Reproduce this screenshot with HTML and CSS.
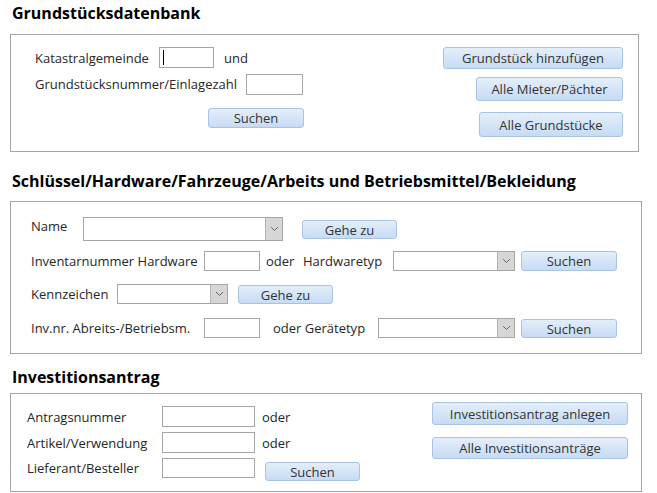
FILE: index.html
```html
<!DOCTYPE html>
<html>
<head>
  <title>Verwaltung</title>
<link rel="stylesheet" href="styles.css">
</head>
<body>
  <div class="form">
    <h2 class="title">Grundstücksdatenbank</h2>
    <div class="box box-grund">
      <div class="col-left">
        <div class="row">
          <span class="lbl w124">Katastralgemeinde</span>
          <span class="field w55"><i class="caret"></i></span>
          <span class="txt ml10">und</span>
        </div>
        <div class="row mt6 h20">
          <span class="lbl w211">Grundstücksnummer/Einlagezahl</span>
          <span class="field w57"></span>
        </div>
        <button class="btn btn-suchen1">Suchen</button>
      </div>
      <div class="col-right cr-grund">
        <button class="btn gb1">Grundstück hinzufügen</button>
        <button class="btn gb2">Alle Mieter/Pächter</button>
        <button class="btn gb3">Alle Grundstücke</button>
      </div>
    </div>

    <h2 class="title t2">Schlüssel/Hardware/Fahrzeuge/Arbeits und Betriebsmittel/Bekleidung</h2>
    <div class="box box-inv">
      <div class="col-left cl-inv">
        <div class="row h24">
          <span class="lbl w52 up">Name</span>
          <span class="combo w200"><span class="arrow"><svg width="9" height="6" viewBox="0 0 9 6"><path d="M1 1l3.5 3.5L8 1" fill="none" stroke="#666" stroke-width="1"/></svg></span></span>
          <button class="btn ml19 w95 h19">Gehe zu</button>
        </div>
        <div class="row mt9">
          <span class="lbl w173">Inventarnummer Hardware</span>
          <span class="field w56 h20"></span>
          <span class="txt ml6 w37">oder</span>
          <span class="lbl w90">Hardwaretyp</span>
          <span class="combo w122 h20"><span class="arrow"><svg width="9" height="6" viewBox="0 0 9 6"><path d="M1 1l3.5 3.5L8 1" fill="none" stroke="#666" stroke-width="1"/></svg></span></span>
          <button class="btn ml6 w96 h20">Suchen</button>
        </div>
        <div class="row mt13 h20">
          <span class="lbl w86">Kennzeichen</span>
          <span class="combo w111 h20"><span class="arrow"><svg width="9" height="6" viewBox="0 0 9 6"><path d="M1 1l3.5 3.5L8 1" fill="none" stroke="#666" stroke-width="1"/></svg></span></span>
          <button class="btn ml10 w95 h19">Gehe zu</button>
        </div>
        <div class="row mt14 h20">
          <span class="lbl w173">Inv.nr. Abreits-/Betriebsm.</span>
          <span class="field w56 h20"></span>
          <span class="txt ml13 w105">oder Gerätetyp</span>
          <span class="combo w137 h20"><span class="arrow"><svg width="9" height="6" viewBox="0 0 9 6"><path d="M1 1l3.5 3.5L8 1" fill="none" stroke="#666" stroke-width="1"/></svg></span></span>
          <button class="btn ml6 w96 h19">Suchen</button>
        </div>
      </div>
    </div>

    <h2 class="title t3">Investitionsantrag</h2>
    <div class="box box-antrag">
      <div class="col-left cl-antrag">
        <div class="row">
          <span class="lbl w135">Antragsnummer</span>
          <span class="field w93"></span>
          <span class="txt ml7">oder</span>
        </div>
        <div class="row mt5">
          <span class="lbl w135">Artikel/Verwendung</span>
          <span class="field w93"></span>
          <span class="txt ml7">oder</span>
        </div>
        <div class="row mt5 top">
          <span class="lbl w135 lh21">Lieferant/Besteller</span>
          <span class="field w93 h20"></span>
          <button class="btn ml10 w95 h19 mt4">Suchen</button>
        </div>
      </div>
      <div class="col-right cr-antrag">
        <button class="btn w196 h23">Investitionsantrag anlegen</button>
        <button class="btn w196 h22 mt12">Alle Investitionsanträge</button>
      </div>
    </div>
  </div>
</body>
</html>
```

FILE: styles.css
```css
* {
  box-sizing: border-box;
}
body {
  margin: 0;
  font-family: "Open Sans", Arial, sans-serif;
  font-size: 13px;
  color: #262626;
  background-color: #fff;
}
.form {
  padding: 3px 0 0 10px;
}
.title {
  margin: 0;
  padding-left: 2px;
  height: 20px;
  line-height: 20px;
  font-size: 16px;
  font-weight: 700;
  color: #000;
  white-space: nowrap;
}
.t2 {
  margin-top: 19px;
}
.t3 {
  margin-top: 13px;
}
.box {
  display: flex;
  justify-content: space-between;
  border: 1px solid #a5a5a5;
}
.box-grund {
  width: 629px;
  height: 118px;
  margin-top: 11px;
}
.box-inv {
  width: 632px;
  height: 153px;
  margin-top: 10px;
}
.box-antrag {
  width: 632px;
  height: 99px;
  margin-top: 6px;
}

/* columns */
.col-left {
  padding: 12px 0 0 24px;
}
.cl-inv {
  padding: 15px 0 0 20px;
}
.cl-antrag {
  padding: 12px 0 0 16px;
}
.col-right {
  display: flex;
  flex-direction: column;
  align-items: flex-end;
}
.cr-grund {
  padding: 12px 15px 0 0;
}
.cr-antrag {
  padding: 8px 13px 0 0;
}

/* rows */
.row {
  display: flex;
  align-items: center;
  height: 21px;
}
.row.top {
  align-items: flex-start;
}
.lbl, .txt {
  white-space: nowrap;
  flex-shrink: 0;
}
.up {
  position: relative;
  top: -3px;
}
.lh21 {
  line-height: 20px;
}

/* controls */
.field {
  position: relative;
  display: block;
  height: 21px;
  border: 1px solid #a6a6a6;
  background-color: #fff;
  flex-shrink: 0;
}
.caret {
  position: absolute;
  left: 3px;
  top: 2px;
  width: 1px;
  height: 15px;
  background-color: #000;
}
.combo {
  display: flex;
  justify-content: flex-end;
  height: 24px;
  border: 1px solid #a6a6a6;
  background-color: #fff;
  flex-shrink: 0;
}
.arrow {
  display: flex;
  align-items: center;
  justify-content: center;
  width: 17px;
  border-left: 1px solid #b4b4b4;
  background-color: #d6d6d6;
}
.btn {
  display: block;
  padding: 0;
  border: 1px solid #a9c3e2;
  border-radius: 3px;
  background: linear-gradient(#e4eefa, #c6dbf3);
  font-family: "Open Sans", Arial, sans-serif;
  font-size: 13px;
  color: #333;
  cursor: pointer;
  flex-shrink: 0;
}
.btn-suchen1 {
  width: 96px;
  height: 20px;
  margin: 14px 0 0 173px;
}
.gb1 {
  width: 180px;
  height: 22px;
}
.gb2 {
  width: 147px;
  height: 24px;
  margin-top: 8px;
}
.gb3 {
  width: 144px;
  height: 25px;
  margin-top: 11px;
}

/* sizes */
.w37 { width: 37px; }
.w52 { width: 52px; }
.w55 { width: 55px; }
.w56 { width: 56px; }
.w57 { width: 57px; }
.w86 { width: 86px; }
.w90 { width: 90px; }
.w93 { width: 93px; }
.w95 { width: 95px; }
.w96 { width: 96px; }
.w105 { width: 105px; }
.w111 { width: 111px; }
.w122 { width: 122px; }
.w124 { width: 124px; }
.w135 { width: 135px; }
.w137 { width: 137px; }
.w173 { width: 173px; }
.w196 { width: 196px; }
.w200 { width: 200px; }
.w211 { width: 211px; }
.h19 { height: 19px; }
.h20 { height: 20px; }
.h22 { height: 22px; }
.h23 { height: 23px; }
.h24 { height: 24px; }
.mt4 { margin-top: 4px; }
.mt5 { margin-top: 5px; }
.mt6 { margin-top: 6px; }
.mt9 { margin-top: 9px; }
.mt12 { margin-top: 12px; }
.mt13 { margin-top: 13px; }
.mt14 { margin-top: 14px; }
.ml6 { margin-left: 6px; }
.ml7 { margin-left: 7px; }
.ml10 { margin-left: 10px; }
.ml13 { margin-left: 13px; }
.ml19 { margin-left: 19px; }
```
